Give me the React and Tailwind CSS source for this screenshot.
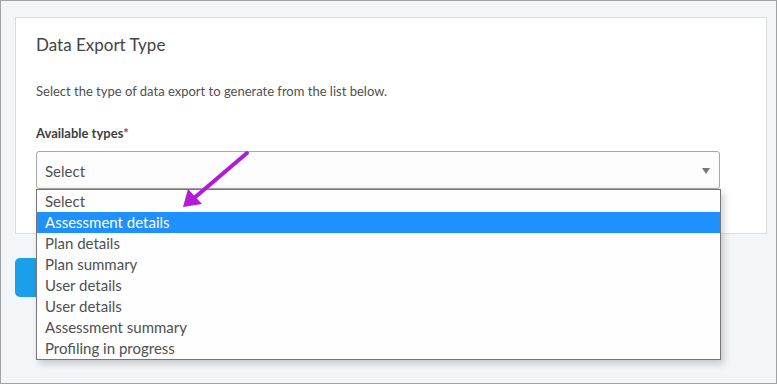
const options = [
  'Select',
  'Assessment details',
  'Plan details',
  'Plan summary',
  'User details',
  'User details',
  'Assessment summary',
  'Profiling in progress',
]

function ExportArrow() {
  return (
    <svg
      className="absolute left-0 top-0 pointer-events-none z-20"
      width="777"
      height="384"
      viewBox="0 0 777 384"
    >
      <line x1="246" y1="152" x2="192" y2="198" stroke="#b21ad3" strokeWidth="4" strokeLinecap="round" />
      <polygon points="182,206 187,188 201,203" fill="#b21ad3" />
    </svg>
  )
}

export default function App() {
  return (
    <div
      className="relative w-[777px] h-[384px] overflow-hidden border border-[#a2a2a2] bg-[#f3f6f9] pt-4 pl-[14px] pr-[9px]"
      style={{ fontFamily: 'Lato, "Liberation Sans", sans-serif' }}
    >
      <section className="border border-[#d9dde1] bg-white pl-5 pr-[46px] pt-4 pb-[44px]">
        <h1 className="text-[17px] leading-[22px] font-normal text-[#444]">Data Export Type</h1>
        <p className="mt-[25px] text-[13px] leading-5 text-[#505050]">
          Select the type of data export to generate from the list below.
        </p>
        <label className="mt-[22px] block text-[13px] leading-5 font-bold text-[#404040]">
          Available types<span className="text-[#c9302c]">*</span>
        </label>

        <div className="relative mt-2">
          <div className="flex h-[38px] items-center justify-between rounded-[3px] border border-[#a9a9a9] bg-[#fdfdfd] pt-[2px] pl-2 pr-[9px] shadow-[inset_0_-2px_3px_rgba(0,0,0,0.04)]">
            <span className="text-[15px] text-[#505050]">Select</span>
            <span className="h-0 w-0 border-x-[4px] border-t-[6px] border-x-transparent border-t-[#777]" />
          </div>

          {/* open list */}
          <ul className="absolute left-0 top-[38px] z-10 w-[685px] border border-[#767676] bg-[#fefefe] pt-[1px] shadow-[3px_4px_7px_rgba(0,0,0,0.18)]">
            {options.map((opt, i) => (
              <li
                key={i}
                className={`h-[21px] pl-2 text-[15px] leading-[21px] ${
                  i === 1 ? 'bg-[#1e90ff] text-white' : 'text-[#505050]'
                }`}
              >
                {opt}
              </li>
            ))}
          </ul>
        </div>
      </section>

      <button aria-label="Generate" className="mt-6 block h-[39px] w-[130px] rounded-[5px] bg-[#1a9fe9]" />

      <ExportArrow />
    </div>
  )
}
